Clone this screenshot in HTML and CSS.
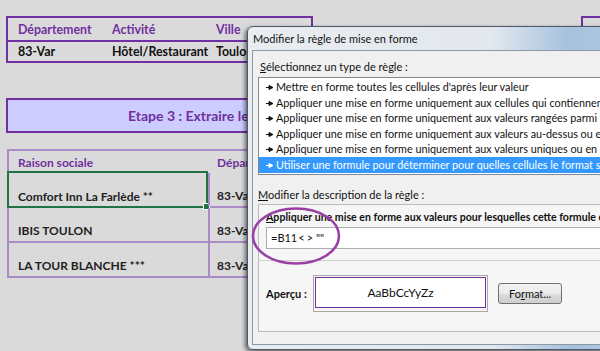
FILE: index.html
```html
<!DOCTYPE html>
<html lang="fr">
<head>
  <meta charset="UTF-8">
  <meta name="viewport" content="width=device-width, initial-scale=1.0">
  <title>Modifier la règle de mise en forme</title>
  <link rel="stylesheet" href="styles.css">
</head>
<body>
  <div class="sheet">
    <div class="top-row">
      <div class="info">
        <div class="info-row head">
          <span>Département</span>
          <span>Activité</span>
          <span>Ville</span>
        </div>
        <div class="info-row">
          <span>83-Var</span>
          <span>Hôtel/Restaurant</span>
          <span>Toulon</span>
        </div>
      </div>
      <div class="stub"></div>
    </div>

    <div class="banner">Etape 3 : Extraire les enregistrements</div>

    <div class="results">
      <div class="res-row head">
        <span class="cell">Raison sociale</span>
        <span class="cell">Département</span>
      </div>
      <div class="res-row">
        <span class="cell selected">Comfort Inn La Farlède **<i class="handle"></i></span>
        <span class="cell">83-Var</span>
      </div>
      <div class="res-row">
        <span class="cell">IBIS TOULON</span>
        <span class="cell">83-Var</span>
      </div>
      <div class="res-row">
        <span class="cell">LA TOUR BLANCHE ***</span>
        <span class="cell">83-Var</span>
      </div>
    </div>
  </div>

  <!-- dialog window on top of the sheet -->
  <div class="dialog">
    <div class="title">Modifier la règle de mise en forme</div>
    <div class="dialog-body">
      <div class="label"><u>S</u>électionnez un type de règle :</div>
      <ul class="rule-list">
        <li><svg class="arrow" width="7" height="5" viewBox="0 0 7 5"><path d="M0 2.5H3.5M3 0.5L7 2.5L3 4.5Z"/></svg>Mettre en forme toutes les cellules d'après leur valeur</li>
        <li><svg class="arrow" width="7" height="5" viewBox="0 0 7 5"><path d="M0 2.5H3.5M3 0.5L7 2.5L3 4.5Z"/></svg>Appliquer une mise en forme uniquement aux cellules qui contiennent</li>
        <li><svg class="arrow" width="7" height="5" viewBox="0 0 7 5"><path d="M0 2.5H3.5M3 0.5L7 2.5L3 4.5Z"/></svg>Appliquer une mise en forme uniquement aux valeurs rangées parmi les premières</li>
        <li><svg class="arrow" width="7" height="5" viewBox="0 0 7 5"><path d="M0 2.5H3.5M3 0.5L7 2.5L3 4.5Z"/></svg>Appliquer une mise en forme uniquement aux valeurs au-dessus ou en dessous</li>
        <li><svg class="arrow" width="7" height="5" viewBox="0 0 7 5"><path d="M0 2.5H3.5M3 0.5L7 2.5L3 4.5Z"/></svg>Appliquer une mise en forme uniquement aux valeurs uniques ou en double</li>
        <li class="active"><svg class="arrow" width="7" height="5" viewBox="0 0 7 5"><path d="M0 2.5H3.5M3 0.5L7 2.5L3 4.5Z"/></svg>Utiliser une formule pour déterminer pour quelles cellules le format sera appliqué</li>
      </ul>

      <div class="label desc"><u>M</u>odifier la description de la règle :</div>
      <div class="group">
        <div class="group-title"><u>A</u>ppliquer une mise en forme aux valeurs pour lesquelles cette formule est vraie :</div>
        <div class="formula">=B11<span class="op">&lt;&gt;</span>""</div>
        <div class="sep"></div>
        <div class="preview-row">
          <span class="preview-label">Aperçu :</span>
          <div class="preview"><div class="preview-inner">AaBbCcYyZz</div></div>
          <button class="btn">Fo<u>r</u>mat...</button>
        </div>
      </div>
    </div>
    <svg class="circle" width="96" height="64" viewBox="0 0 96 64">
      <ellipse cx="48" cy="32" rx="43" ry="27.5" fill="none" stroke="#9a3ea6" stroke-width="2.5"/>
    </svg>
  </div>
</body>
</html>
```

FILE: styles.css
```css
body {
  margin: 0;
  width: 600px;
  height: 351px;
  overflow: hidden;
  position: relative;
  background: #dadada;
  font-family: Lato, 'Liberation Sans', sans-serif;
}

.sheet {
  padding: 16px 0 0 6px;
}

.top-row {
  display: flex;
  gap: 268px;
}

.info {
  flex-shrink: 0;
  width: 303px;
  border: 2px solid #7030a0;
}

.info-row {
  display: grid;
  grid-template-columns: 94px 104px auto;
  padding-left: 10px;
  height: 19px;
  align-items: center;
  font-size: 12.4px;
  font-weight: bold;
  color: #111;
  white-space: nowrap;
  overflow: hidden;
}

.info-row.head {
  height: 22px;
  color: #7030a0;
  border-bottom: 2px solid #7030a0;
}

.stub {
  flex-shrink: 0;
  width: 40px;
  height: 40px;
  border: 2px solid #7030a0;
}

.banner {
  margin-top: 35px;
  width: 580px;
  height: 31px;
  line-height: 31px;
  box-sizing: content-box;
  background: #ccccff;
  border: 2px solid #7030a0;
  padding-left: 120px;
  font-size: 14px;
  font-weight: bold;
  color: #7030a0;
  white-space: nowrap;
}

.results {
  margin: 16px 0 0 1px;
  border-top: 2px solid #a98bc6;
  border-left: 2px solid #a98bc6;
}

.res-row {
  display: flex;
  height: 33px;
  border-bottom: 2px solid #a98bc6;
}

.res-row.head {
  height: 22px;
  border-bottom: none;
}

.cell {
  position: relative;
  width: 190px;
  padding: 0 0 3px 9px;
  display: flex;
  align-items: flex-end;
  font-size: 12px;
  font-weight: bold;
  color: #222;
  white-space: nowrap;
}

.cell + .cell {
  width: 300px;
  border-left: 2px solid #a98bc6;
  padding-left: 7px;
}

.res-row.head .cell {
  align-items: center;
  padding-bottom: 0;
  color: #7030a0;
  border-left: none;
  padding-left: 9px;
}

.res-row.head .cell + .cell {
  padding-left: 9px;
}

.cell.selected {
  margin: -2px 0 -2px -2px;
  width: 188px;
  border: 2px solid #217346;
  padding-bottom: 2px;
}

.handle {
  position: absolute;
  right: -4px;
  bottom: -4px;
  width: 5px;
  height: 5px;
  background: #217346;
  border: 1px solid #fff;
}

/* dialog window */

.dialog {
  position: absolute;
  left: 247px;
  top: 26px;
  width: 420px;
  height: 322px;
  border: 1px solid #4a5868;
  border-radius: 6px;
  background: linear-gradient(to right, #e9edf1 0%, #e3e8ee 58%, #a7c2de 76%, #b3cbe4 100%);
  box-shadow: -2px 2px 4px rgba(0, 0, 0, 0.55);
  font-family: Lato, 'Liberation Sans', sans-serif;
  font-size: 11px;
  color: #111;
}

.title {
  height: 23px;
  line-height: 23px;
  padding-left: 5px;
  font-size: 11px;
}

.dialog-body {
  margin-left: 4px;
  height: 285px;
  background: #f0f0f0;
  border: 1px solid #8b98a6;
  padding: 8px 0 0 5px;
}

.label {
  padding-left: 2px;
  height: 18px;
  line-height: 16px;
}

.rule-list {
  list-style: none;
  margin: 0;
  padding: 1px 0;
  height: 94px;
  background: #fff;
  border: 1px solid #828790;
  font-size: 10.8px;
}

.rule-list li {
  height: 15.6px;
  line-height: 15.6px;
  padding-left: 7px;
  white-space: nowrap;
  overflow: hidden;
}

.rule-list li.active {
  background: #3399ff;
  color: #fff;
}

.arrow {
  margin-right: 3px;
  vertical-align: 1px;
  fill: currentColor;
  stroke: currentColor;
  stroke-width: 1;
}

.label.desc {
  margin-top: 12px;
  padding-left: 0;
  height: 17px;
}

.group {
  height: 122px;
  border: 1px solid #b7bcc2;
  background: #f6f6f6;
  padding: 4px 0 0 7px;
}

.group-title {
  font-weight: bold;
  font-size: 10.6px;
  white-space: nowrap;
  overflow: hidden;
  height: 18px;
  line-height: 16px;
}

.formula {
  height: 20px;
  line-height: 20px;
  background: #fff;
  border: 1px solid #abadb3;
  padding-left: 4px;
}

.op {
  letter-spacing: 2px;
  margin: 0 1px;
}

.sep {
  margin: 11px 0 0 -7px;
  border-top: 1px solid #d0d0d0;
}

.preview-row {
  display: flex;
  align-items: center;
  margin-top: 14px;
}

.preview-label {
  width: 47px;
  font-weight: bold;
}

.preview {
  width: 171px;
  height: 33px;
  border: 1px solid #a8a8a8;
  padding: 1px;
  background: #f6f6f6;
}

.preview-inner {
  height: 31px;
  line-height: 29px;
  background: #fff;
  border: 1px solid #7030a0;
  box-sizing: border-box;
  text-align: center;
  font-size: 12px;
}

.btn {
  margin-left: 10px;
  width: 64px;
  height: 21px;
  padding: 0;
  border: 1px solid #707070;
  border-radius: 3px;
  background: linear-gradient(#f2f2f2 0%, #ebebeb 50%, #dddddd 51%, #cfcfcf 100%);
  font-family: inherit;
  font-size: 11px;
  color: #111;
}

.circle {
  position: absolute;
  left: 0;
  top: 177px;
}
```
